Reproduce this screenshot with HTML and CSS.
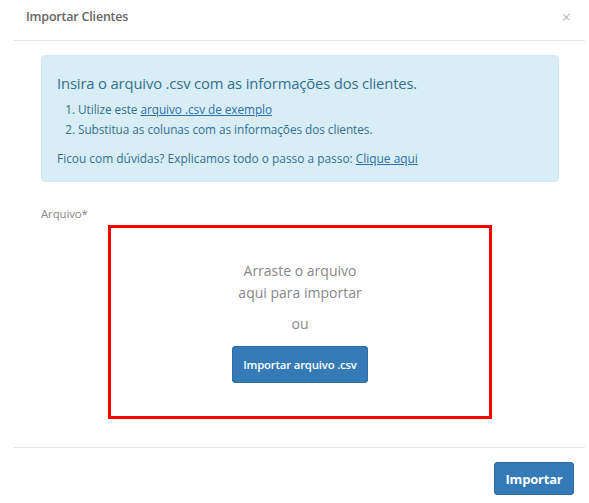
FILE: index.html
```html
<!DOCTYPE html>
<html lang="pt-BR">
<head>
<meta charset="utf-8">
<title>Importar Clientes</title>
<link rel="stylesheet" href="styles.css">
</head>
<body>
<div class="modal">
  <div class="modal-header">
    <h4 class="modal-title">Importar Clientes</h4>
    <span class="close">&#215;</span>
  </div>
  <div class="modal-body">
    <div class="alert">
      <p class="alert-title">Insira o arquivo .csv com as informações dos clientes.</p>
      <ol class="steps">
        <li>Utilize este <a href="#">arquivo .csv de exemplo</a></li>
        <li>Substitua as colunas com as informações dos clientes.</li>
      </ol>
      <p class="help">Ficou com dúvidas? Explicamos todo o passo a passo: <a href="#">Clique aqui</a></p>
    </div>
    <label class="field-label">Arquivo*</label>
    <div class="dropzone">
      <p class="drop-text">Arraste o arquivo<br>aqui para importar</p>
      <p class="or">ou</p>
      <button class="btn btn-primary btn-upload">Importar arquivo .csv</button>
    </div>
  </div>
  <div class="modal-footer">
    <button class="btn btn-primary btn-import">Importar</button>
  </div>
</div>
</body>
</html>
```
FILE: styles.css
```css
html, body {
  margin: 0;
  padding: 0;
  background: #fff;
}
body {
  font-family: "Open Sans", "Noto Sans", sans-serif;
  color: #555;
}
.modal {
  margin: 0 4px 0 14px;
}
.modal-header {
  height: 41px;
  box-sizing: border-box;
  border-bottom: 1px solid #e5e5e5;
  display: flex;
  align-items: center;
  justify-content: space-between;
  padding: 0 14px 7px 12px;
}
.modal-title {
  margin: 0;
  font-size: 12.5px;
  font-weight: 600;
  color: #666;
  letter-spacing: -0.2px;
}
.close {
  color: #bbb;
  font-size: 16px;
  line-height: 1;
}
.modal-body {
  padding: 14px 26px 0 27px;
}
.alert {
  background: #d9edf7;
  border: 1px solid #d0e9f3;
  border-radius: 4px;
  color: #31708f;
  padding: 17px 15px 16px 15px;
  height: 127px;
  box-sizing: border-box;
}
.alert a {
  color: #2a6fa8;
  text-decoration: underline;
}
.alert-title {
  margin: 0;
  font-size: 14.8px;
  line-height: 20px;
  letter-spacing: -0.15px;
}
.steps {
  margin: 6px 0 0 0;
  padding-left: 21px;
  font-size: 11.8px;
  line-height: 20px;
  letter-spacing: -0.05px;
}
.help {
  margin: 9px 0 0 0;
  font-size: 11.9px;
  line-height: 20px;
  letter-spacing: 0;
}
.field-label {
  display: block;
  margin-top: 24px;
  font-size: 11.4px;
  line-height: 16px;
  color: #888;
  letter-spacing: -0.1px;
}
.dropzone {
  margin: 3px 0 0 67px;
  width: 384px;
  height: 194px;
  box-sizing: border-box;
  border: 3px solid #f00;
  display: flex;
  flex-direction: column;
  align-items: center;
  padding-top: 32px;
}
.drop-text {
  margin: 0;
  text-align: center;
  font-size: 14px;
  line-height: 22px;
  color: #888;
}
.or {
  margin: 10px 0 0;
  font-size: 14px;
  line-height: 20px;
  color: #888;
}
.btn {
  font-family: "Open Sans", "Noto Sans", sans-serif;
  border: 1px solid #2e6da4;
  background: #337ab7;
  color: #fff;
  border-radius: 3px;
  cursor: pointer;
}
.btn-upload {
  margin-top: 12px;
  width: 136px;
  height: 37px;
  font-size: 11.4px;
  font-weight: 600;
  letter-spacing: -0.2px;
  padding: 0;
}
.modal-footer {
  margin-top: 28px;
  border-top: 1px solid #e5e5e5;
  display: flex;
  justify-content: flex-end;
  padding: 14px 11px 0 0;
}
.btn-import {
  width: 80px;
  height: 33px;
  font-size: 13px;
  font-weight: 700;
  padding: 0;
  letter-spacing: -0.2px;
}
```
